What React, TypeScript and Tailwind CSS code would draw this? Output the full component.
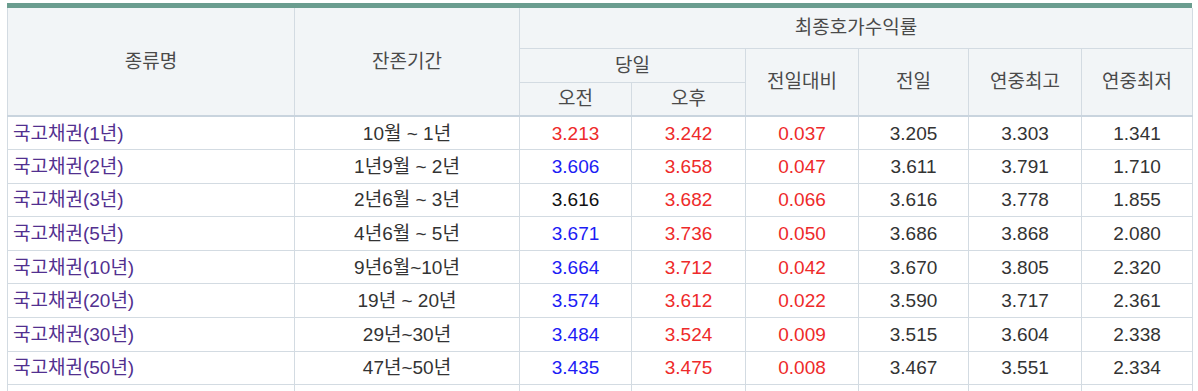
import React from 'react';

interface Bond {
  name: string;
  term: string;
  am: string;
  amColor: 'red' | 'blue' | 'black';
  pm: string;
  diff: string;
  prev: string;
  high: string;
  low: string;
}

const bonds: Bond[] = [
  { name: '국고채권(1년)', term: '10월 ~ 1년', am: '3.213', amColor: 'red', pm: '3.242', diff: '0.037', prev: '3.205', high: '3.303', low: '1.341' },
  { name: '국고채권(2년)', term: '1년9월 ~ 2년', am: '3.606', amColor: 'blue', pm: '3.658', diff: '0.047', prev: '3.611', high: '3.791', low: '1.710' },
  { name: '국고채권(3년)', term: '2년6월 ~ 3년', am: '3.616', amColor: 'black', pm: '3.682', diff: '0.066', prev: '3.616', high: '3.778', low: '1.855' },
  { name: '국고채권(5년)', term: '4년6월 ~ 5년', am: '3.671', amColor: 'blue', pm: '3.736', diff: '0.050', prev: '3.686', high: '3.868', low: '2.080' },
  { name: '국고채권(10년)', term: '9년6월~10년', am: '3.664', amColor: 'blue', pm: '3.712', diff: '0.042', prev: '3.670', high: '3.805', low: '2.320' },
  { name: '국고채권(20년)', term: '19년 ~ 20년', am: '3.574', amColor: 'blue', pm: '3.612', diff: '0.022', prev: '3.590', high: '3.717', low: '2.361' },
  { name: '국고채권(30년)', term: '29년~30년', am: '3.484', amColor: 'blue', pm: '3.524', diff: '0.009', prev: '3.515', high: '3.604', low: '2.338' },
  { name: '국고채권(50년)', term: '47년~50년', am: '3.435', amColor: 'blue', pm: '3.475', diff: '0.008', prev: '3.467', high: '3.551', low: '2.334' },
];

const amStyles = {
  red: 'text-[#ee2a2a]',
  blue: 'text-[#1c1cf5]',
  black: 'text-[#111111]',
};

const th = 'border border-[#d3dbe2] bg-[#f2f5f7] font-normal text-[#4a4a4a] text-center align-middle';
const td = 'border border-[#d3dbe2] text-center align-middle';

export default function App() {
  return (
    <div
      className="bg-white pt-[3px] pl-[7px] pr-[6px] h-[391px] overflow-hidden text-[19px] leading-none"
      style={{ fontFamily: '"Liberation Sans", "Noto Sans CJK KR", sans-serif' }}
    >
      <div className="border-t-[5px] border-[#6a9d8f]">
        <table className="w-full table-fixed border-collapse border-l border-l-[#c6ccd2] border-r border-r-[#c6ccd2]">
          <colgroup>
            <col className="w-[287px]" />
            <col className="w-[225px]" />
            <col className="w-[112px]" />
            <col className="w-[114px]" />
            <col className="w-[113px]" />
            <col className="w-[110px]" />
            <col className="w-[113px]" />
            <col className="w-[111px]" />
          </colgroup>
          <thead>
            <tr className="h-[40px]">
              <th rowSpan={3} className={`${th} border-t-0 border-b-2 border-b-[#c9d4de]`}>종류명</th>
              <th rowSpan={3} className={`${th} border-t-0 border-b-2 border-b-[#c9d4de]`}>잔존기간</th>
              <th colSpan={6} className={`${th} border-t-0`}>최종호가수익률</th>
            </tr>
            <tr className="h-[34px]">
              <th colSpan={2} className={th}>당일</th>
              <th rowSpan={2} className={`${th} border-b-2 border-b-[#c9d4de]`}>전일대비</th>
              <th rowSpan={2} className={`${th} border-b-2 border-b-[#c9d4de]`}>전일</th>
              <th rowSpan={2} className={`${th} border-b-2 border-b-[#c9d4de]`}>연중최고</th>
              <th rowSpan={2} className={`${th} border-b-2 border-b-[#c9d4de]`}>연중최저</th>
            </tr>
            <tr className="h-[34px]">
              <th className={`${th} border-b-2 border-b-[#c9d4de]`}>오전</th>
              <th className={`${th} border-b-2 border-b-[#c9d4de]`}>오후</th>
            </tr>
          </thead>
          <tbody className="text-[#333333]">
            {bonds.map((bond) => (
              <tr key={bond.name} className="h-[33.6px]">
                <td className={`${td} text-left pl-[5px] text-[#52308f]`}>{bond.name}</td>
                <td className={td}>{bond.term}</td>
                <td className={`${td} ${amStyles[bond.amColor]}`}>{bond.am}</td>
                <td className={`${td} text-[#ee2a2a]`}>{bond.pm}</td>
                <td className={`${td} text-[#ee2a2a]`}>{bond.diff}</td>
                <td className={td}>{bond.prev}</td>
                <td className={td}>{bond.high}</td>
                <td className={td}>{bond.low}</td>
              </tr>
            ))}
            {/* next row is cut off by the window edge */}
            <tr className="h-[33.6px]">
              {Array.from({ length: 8 }).map((_, i) => (
                <td key={i} className={td}></td>
              ))}
            </tr>
          </tbody>
        </table>
      </div>
    </div>
  );
}
